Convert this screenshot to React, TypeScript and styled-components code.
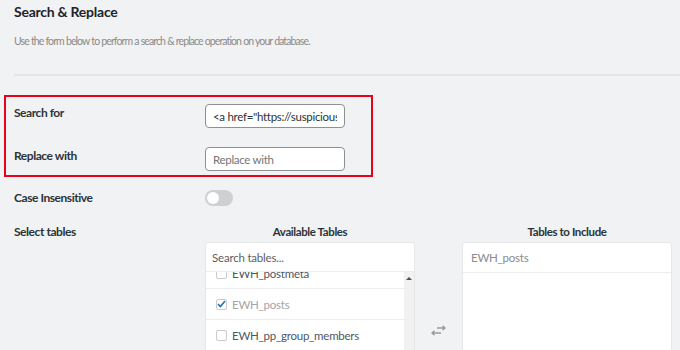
import React from "react";
import styled, { createGlobalStyle } from "styled-components";

const GlobalStyle = createGlobalStyle`
  html, body {
    margin: 0;
    padding: 0;
    background: #f1f2f4;
  }
  body {
    font-family: Lato, "Open Sans", sans-serif;
    color: #2c3338;
  }
`;

const Page = styled.div`
  width: 680px;
  height: 350px;
  overflow: hidden;
  padding: 3px 0 0 14px;
  box-sizing: border-box;
`;

const Title = styled.h1`
  margin: 0;
  font-size: 14px;
  line-height: 18px;
  font-weight: 700;
  letter-spacing: -0.25px;
  color: #1d2327;
`;

const Description = styled.p`
  margin: 11px 0 0;
  font-size: 10.5px;
  line-height: 18px;
  letter-spacing: -0.9px;
  word-spacing: 0.3px;
  color: #8a8a8a;
`;

const Divider = styled.hr`
  margin: 24px 0 0;
  border: none;
  height: 2px;
  background: #e4e5e8;
`;

const Highlight = styled.div`
  margin: 19px 0 0 -10px;
  width: 369px;
  box-sizing: border-box;
  border: 2px solid #e8001c;
  padding: 7px 0 4px 8px;
  display: flex;
  flex-direction: column;
  gap: 19px;
`;

const Row = styled.div<{ $top?: number }>`
  display: flex;
  align-items: flex-start;
  margin-top: ${({ $top }) => $top ?? 0}px;
`;

const Label = styled.div`
  width: 191px;
  flex-shrink: 0;
  font-size: 12px;
  line-height: 18px;
  font-weight: 700;
  letter-spacing: -0.45px;
  color: #2c3338;
`;

const TextInput = styled.input`
  width: 140px;
  height: 24px;
  box-sizing: border-box;
  border: 1px solid #8c8f94;
  border-radius: 4px;
  padding: 0 7px;
  font-family: inherit;
  font-size: 11.5px;
  letter-spacing: -0.3px;
  color: #2c3338;
  background: #fff;
  &::placeholder {
    color: #757575;
  }
`;

const Toggle = styled.div<{ $on?: boolean }>`
  margin-top: 1px;
  width: 28px;
  height: 16px;
  border-radius: 8px;
  background: ${({ $on }) => ($on ? "#2271b1" : "#cfd0d2")};
  position: relative;
  &::after {
    content: "";
    position: absolute;
    top: 2px;
    left: ${({ $on }) => ($on ? "14px" : "2px")};
    width: 12px;
    height: 12px;
    border-radius: 50%;
    background: #fff;
  }
`;

const Tables = styled.div`
  display: grid;
  grid-template-columns: 210px 47px 210px;
  grid-template-rows: 18px auto;
  row-gap: 1px;
`;

const ColumnTitle = styled.div`
  text-align: center;
  font-size: 11.5px;
  line-height: 18px;
  font-weight: 700;
  letter-spacing: -0.4px;
  color: #2c3338;
`;

const Box = styled.div`
  background: #fff;
  border: 1px solid #e6e7e9;
  border-radius: 3px;
  height: 140px;
  overflow: hidden;
  display: flex;
  flex-direction: column;
`;

const SearchField = styled.div`
  height: 28px;
  flex-shrink: 0;
  border-bottom: 1px solid #ececee;
  padding: 0 6px;
  display: flex;
  align-items: center;
  font-size: 11.5px;
  letter-spacing: -0.2px;
  color: #5f5f5f;
`;

const ListArea = styled.div`
  display: flex;
  flex: 1;
  overflow: hidden;
`;

const List = styled.div`
  flex: 1;
  margin-top: -14px;
`;

const Item = styled.div<{ $muted?: boolean }>`
  height: 30px;
  border-bottom: 1px solid #ececee;
  display: flex;
  align-items: center;
  gap: 5px;
  padding-left: 10px;
  font-size: 11.5px;
  letter-spacing: -0.25px;
  color: ${({ $muted }) => ($muted ? "#a2a4a8" : "#50575e")};
`;

const IncludedItem = styled(Item)`
  height: 29px;
  flex-shrink: 0;
  padding-left: 8px;
  color: #8a8c90;
`;

const Check = styled.span`
  width: 11px;
  height: 11px;
  box-sizing: border-box;
  border: 1px solid #c9cbcf;
  border-radius: 2px;
  display: inline-flex;
  align-items: center;
  justify-content: center;
  background: #fff;
`;

const ScrollTrack = styled.div`
  width: 10px;
  background: #f1f1f1;
  display: flex;
  justify-content: center;
  padding-top: 5px;
  &::before {
    content: "";
    width: 0;
    height: 0;
    border-left: 3px solid transparent;
    border-right: 3px solid transparent;
    border-bottom: 3px solid #505050;
  }
`;

const SwapCell = styled.div`
  display: flex;
  justify-content: center;
  padding: 83px 0 0 0;
  color: #9a9a9a;
`;

function CheckMark() {
  return (
    <svg width="9" height="8" viewBox="0 0 9 8">
      <path d="M1 4.2 3.4 6.5 8 1" fill="none" stroke="#2271b1" strokeWidth="1.6" />
    </svg>
  );
}

function SwapIcon() {
  return (
    <svg width="15" height="11" viewBox="0 0 15 11" fill="none" stroke="currentColor" strokeWidth="1.3">
      <path d="M6 3h8M11.5 0.8 14 3l-2.5 2.2" />
      <path d="M10 8H1M3.5 5.8 1 8l2.5 2.2" />
    </svg>
  );
}

const available = [
  { name: "EWH_postmeta", checked: false },
  { name: "EWH_posts", checked: true },
  { name: "EWH_pp_group_members", checked: false },
];

export default function App() {
  return (
    <Page>
      <GlobalStyle />
      <Title>Search &amp; Replace</Title>
      <Description>Use the form below to perform a search &amp; replace operation on your database.</Description>
      <Divider />
      <Highlight>
        <Row>
          <Label>Search for</Label>
          <TextInput defaultValue={'<a href="https://suspicious-site.example">'} />
        </Row>
        <Row>
          <Label>Replace with</Label>
          <TextInput placeholder="Replace with" />
        </Row>
      </Highlight>
      <Row $top={12}>
        <Label>Case Insensitive</Label>
        <Toggle />
      </Row>
      <Row $top={16}>
        <Label>Select tables</Label>
        <Tables>
          <ColumnTitle>Available Tables</ColumnTitle>
          <div />
          <ColumnTitle>Tables to Include</ColumnTitle>
          <Box>
            <SearchField>Search tables...</SearchField>
            <ListArea>
              <List>
                {available.map((t) => (
                  <Item key={t.name} $muted={t.checked}>
                    <Check>{t.checked && <CheckMark />}</Check>
                    {t.name}
                  </Item>
                ))}
              </List>
              <ScrollTrack />
            </ListArea>
          </Box>
          <SwapCell>
            <SwapIcon />
          </SwapCell>
          <Box>
            <IncludedItem>EWH_posts</IncludedItem>
          </Box>
        </Tables>
      </Row>
    </Page>
  );
}
